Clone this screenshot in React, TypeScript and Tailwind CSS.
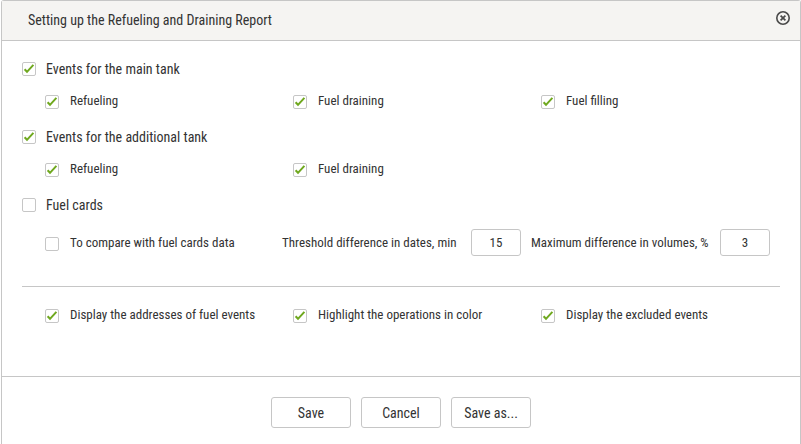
import { useState } from 'react';

interface CheckProps {
  label: string;
  defaultChecked?: boolean;
  main?: boolean;
}

function Check({ label, defaultChecked = true, main = false }: CheckProps) {
  const [checked, setChecked] = useState(defaultChecked);

  return (
    <label className={main ? 'flex h-5 items-center gap-2.5 text-sm' : 'flex h-5 items-center gap-[11px] text-[13px]'}>
      <span className={main ? 'relative size-3.5 shrink-0' : 'relative mt-0.5 size-3.5 shrink-0'}>
        <input
          type="checkbox"
          checked={checked}
          onChange={(e) => setChecked(e.target.checked)}
          className="block size-3.5 appearance-none rounded-xs border border-[#c6c6c6] bg-white"
        />
        {checked && (
          <svg viewBox="0 0 14 14" className="pointer-events-none absolute inset-0 size-3.5" fill="none">
            <path d="M2.6 7.3 5 9.8 11.4 2.8" stroke="#6fa81e" strokeWidth="2" />
          </svg>
        )}
      </span>
      <span>{label}</span>
    </label>
  );
}

interface NumberFieldProps {
  id: string;
  label: string;
  value: string;
}

function NumberField({ id, label, value }: NumberFieldProps) {
  return (
    <div className="flex w-[239px] items-center justify-between">
      <label htmlFor={id}>{label}</label>
      <input
        id={id}
        type="text"
        defaultValue={value}
        className="h-[27px] w-[50px] rounded-[3px] border border-[#c6c6c6] bg-white text-center"
      />
    </div>
  );
}

const actions = ['Save', 'Cancel', 'Save as...'];

export default function App() {
  return (
    <div className="min-h-screen bg-white pl-px font-['Roboto_Condensed','Roboto',sans-serif] text-[#333]">
      <section className="flex min-h-screen flex-col rounded-t-[3px] border border-b-0 border-[#c6c6c6]">
        <header className="flex h-10 items-center justify-between border-b border-[#c6c6c6] bg-[#f5f4f2] pr-2.5 pb-px pl-[26px]">
          <h1 className="text-sm">Setting up the Refueling and Draining Report</h1>
          <button type="button" aria-label="Close" className="mb-1">
            <svg viewBox="0 0 14 14" className="size-3.5" fill="none" stroke="#4a4a4a">
              <circle cx="7" cy="7" r="6.2" strokeWidth="1.6" />
              <path d="M4.6 4.6 9.4 9.4M9.4 4.6 4.6 9.4" strokeWidth="1.7" />
            </svg>
          </button>
        </header>

        <main className="flex-1 pt-[18px] pr-[11px] pb-[50px] pl-5">
          <Check main label="Events for the main tank" />
          <div className="mt-3 mb-4 grid grid-cols-3 pl-[23px]">
            <Check label="Refueling" />
            <Check label="Fuel draining" />
            <Check label="Fuel filling" />
          </div>

          <Check main label="Events for the additional tank" />
          <div className="mt-3 mb-4 grid grid-cols-3 pl-[23px]">
            <Check label="Refueling" />
            <Check label="Fuel draining" />
          </div>

          <Check main label="Fuel cards" defaultChecked={false} />
          <div className="mt-3.5 flex items-center gap-2.5 pr-[19px] pl-[23px] text-[13px]">
            <div className="flex-1">
              <Check label="To compare with fuel cards data" defaultChecked={false} />
            </div>
            <NumberField id="dates" label="Threshold difference in dates, min" value="15" />
            <NumberField id="volumes" label="Maximum difference in volumes, %" value="3" />
          </div>

          <hr className="mt-[30px] mr-[9px] mb-[18px] border-[#c6c6c6]" />

          <div className="grid grid-cols-3 pl-[23px]">
            <Check label="Display the addresses of fuel events" />
            <Check label="Highlight the operations in color" />
            <Check label="Display the excluded events" />
          </div>
        </main>

        <footer className="flex justify-center gap-2.5 border-t border-[#c6c6c6] pt-5 pb-4">
          {actions.map((action) => (
            <button
              key={action}
              type="button"
              className="h-[31px] w-20 rounded-[3px] border border-[#c6c6c6] bg-white text-sm"
            >
              {action}
            </button>
          ))}
        </footer>
      </section>
    </div>
  );
}
